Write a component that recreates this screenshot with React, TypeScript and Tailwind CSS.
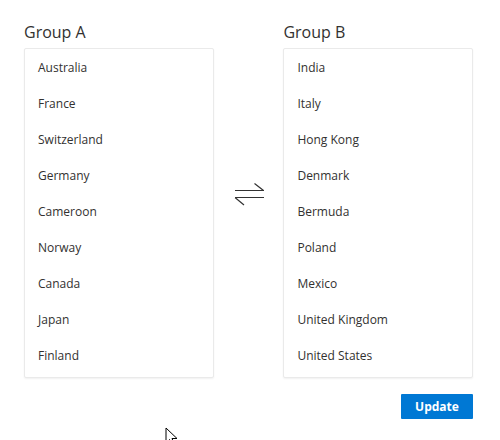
import React from "react";

const groupA = ["Australia", "France", "Switzerland", "Germany", "Cameroon", "Norway", "Canada", "Japan", "Finland"];
const groupB = ["India", "Italy", "Hong Kong", "Denmark", "Bermuda", "Poland", "Mexico", "United Kingdom", "United States"];

function ListBox({ title, items }: { title: string; items: string[] }) {
  return (
    <div className="flex flex-col w-[190px]">
      <div className="text-[16px] leading-[24px] h-[28px] text-[#323130] font-medium">{title}</div>
      <div className="border border-[#eaeaea] rounded-[2px] shadow-[0_1px_2px_rgba(0,0,0,0.06)] bg-white pt-px pb-[3px]">
        {items.map((it) => (
          <div key={it} className="h-9 flex items-center pl-[13px] text-[12px] text-[#323130]">
            {it}
          </div>
        ))}
      </div>
    </div>
  );
}

export default function App() {
  return (
    <div
      className="w-[500px] h-[440px] bg-white relative overflow-hidden"
      style={{ fontFamily: '"Open Sans", "Noto Sans", sans-serif' }}
    >
      <div className="pt-[20px] pl-[24px] flex flex-col w-[473px]">
        <div className="flex items-start">
          <ListBox title="Group A" items={groupA} />
          <div className="w-[70px] flex justify-center pt-[161px]">
            <svg width="32" height="26" viewBox="0 0 32 26" fill="none" stroke="#333" strokeWidth="1.2">
              <path d="M2 9.5 H31 M21.5 2.5 L30.5 9.5" />
              <path d="M2 16.5 H31 M2 16.5 L11 24" />
            </svg>
          </div>
          <ListBox title="Group B" items={groupB} />
        </div>
        <div className="flex justify-end mt-4">
          <button className="w-[72px] h-[25px] bg-[#0078d4] text-white text-[12px] font-bold rounded-[1px]">
            Update
          </button>
        </div>
      </div>
      <svg className="absolute left-[165px] top-[427px]" width="14" height="20" viewBox="0 0 14 20">
        <path d="M1 1 V16 L4.5 12.5 L7 18.5 L9.5 17.5 L7 11.5 H12 Z" fill="white" stroke="black" strokeWidth="1" />
      </svg>
    </div>
  );
}
